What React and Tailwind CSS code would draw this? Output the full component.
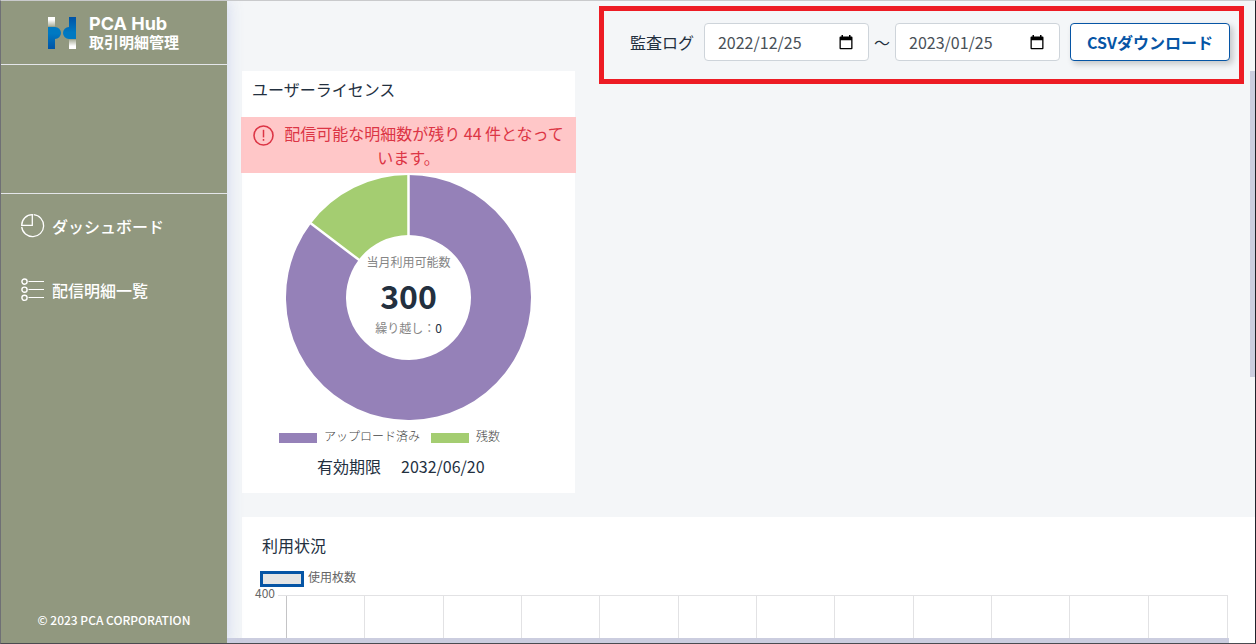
const TOTAL = 300;
const REMAINING = 44;

function polar(radius, degrees) {
  const rad = ((degrees - 90) * Math.PI) / 180;
  return `${122.5 + radius * Math.cos(rad)} ${122.5 + radius * Math.sin(rad)}`;
}

function slice(from, to) {
  const large = to - from > 180 ? 1 : 0;
  return `M${polar(122.5, from)} A122.5 122.5 0 ${large} 1 ${polar(122.5, to)} L${polar(62.5, to)} A62.5 62.5 0 ${large} 0 ${polar(62.5, from)} Z`;
}

function LogoMark() {
  return (
    <svg width="28" height="32" viewBox="0 0 28 32" aria-hidden="true">
      <defs>
        <linearGradient id="fadeDown" x1="0" y1="0" x2="0" y2="1">
          <stop offset="0.3" stopColor="#fff" />
          <stop offset="1" stopColor="#fff" stopOpacity="0.2" />
        </linearGradient>
        <linearGradient id="fadeUp" x1="0" y1="1" x2="0" y2="0">
          <stop offset="0.3" stopColor="#fff" />
          <stop offset="1" stopColor="#fff" stopOpacity="0.2" />
        </linearGradient>
        <linearGradient id="blueDown" x1="0" y1="0" x2="0" y2="1">
          <stop offset="0.3" stopColor="#0079c2" />
          <stop offset="1" stopColor="#0053a6" />
        </linearGradient>
        <linearGradient id="blueUp" x1="0" y1="1" x2="0" y2="0">
          <stop offset="0.3" stopColor="#0079c2" />
          <stop offset="1" stopColor="#0053a6" />
        </linearGradient>
      </defs>
      <path d="M0 0H7V9.5H0Z" fill="url(#fadeDown)" />
      <path d="M21 22.5H28V32H21Z" fill="url(#fadeUp)" />
      <path d="M0 10H7A6 6 0 0 1 7 22V32H0Z" fill="url(#blueDown)" />
      <path d="M28 22H21A6 6 0 0 1 21 10V0H28Z" fill="url(#blueUp)" />
    </svg>
  );
}

function PieIcon() {
  return (
    <svg width="24" height="24" viewBox="0 0 24 24" fill="none" stroke="#fff" strokeWidth="1.3" aria-hidden="true">
      <path d="M12.7 0.7A11 11 0 1 1 0.7 12.9" />
      <path d="M0.7 11.3H11.3V0.7A10.6 10.6 0 0 0 0.7 11.3Z" />
    </svg>
  );
}

function ListIcon() {
  return (
    <svg width="24" height="24" viewBox="0 0 24 24" fill="none" stroke="#fff" strokeWidth="1.4" aria-hidden="true">
      <circle cx="3.5" cy="3.6" r="2.6" />
      <circle cx="3.5" cy="11.7" r="2.6" />
      <circle cx="3.5" cy="19.8" r="2.6" />
      <path d="M7.5 3.5H23M7.5 11.5H23M7.5 19.5H23" strokeWidth="1.1" />
    </svg>
  );
}

function AlertIcon() {
  return (
    <svg className="-my-1 mr-[10px] inline align-middle" width="21" height="21" viewBox="0 0 21 21" fill="none" stroke="#dc3545" aria-hidden="true">
      <circle cx="10.5" cy="10.5" r="9.5" strokeWidth="1.6" />
      <path d="M10.5 4.8V12.4" strokeWidth="1.5" />
      <path d="M10.5 14V15.8" strokeWidth="1.5" />
    </svg>
  );
}

function CalendarIcon() {
  return (
    <svg width="14" height="15" viewBox="0 0 14 15" aria-hidden="true">
      <path d="M2.5 0H4V1.5H10V0H11.5V1.5H12.5Q13.5 1.5 13.5 2.5V13.3Q13.5 14.3 12.5 14.3H1.5Q0.5 14.3 0.5 13.3V2.5Q0.5 1.5 1.5 1.5H2.5ZM1.8 5.2V13H12.2V5.2Z" fill="#000" fillRule="evenodd" />
    </svg>
  );
}

function DateField({ label, value }) {
  return (
    <div className="flex h-[38px] w-[165px] items-center rounded border border-[#ced4da] bg-white pl-[13px] pr-[15px]">
      <input
        type="text"
        aria-label={label}
        defaultValue={value}
        className="w-full min-w-0 bg-transparent text-base text-[#495057] outline-none"
      />
      <button type="button" aria-label={`${label}を選択`} className="shrink-0">
        <CalendarIcon />
      </button>
    </div>
  );
}

function Sidebar() {
  return (
    <aside className="z-10 flex w-[226px] shrink-0 flex-col bg-[#91987f] text-white shadow-[0_0_15px_rgba(200,208,235,0.9)]">
      <div className="flex h-16 items-center gap-[13px] border-b border-[#e4e6ea] pl-[47px]">
        <LogoMark />
        <div>
          <div className="font-[Inter,sans-serif] text-lg leading-[19px] font-bold">PCA Hub</div>
          <div className="text-[15px] leading-[18px] font-bold">取引明細管理</div>
        </div>
      </div>
      <div className="h-[129px] border-b border-[#e4e6ea]" />
      <nav className="flex flex-col font-medium">
        <a href="#dashboard" className="flex h-16 items-center gap-[7px] pl-5">
          <PieIcon />
          ダッシュボード
        </a>
        <a href="#list" className="flex h-16 items-center gap-[7px] pl-5">
          <ListIcon />
          配信明細一覧
        </a>
      </nav>
      <footer className="mt-auto pb-[13px] text-center text-xs leading-5 font-medium">© 2023 PCA CORPORATION</footer>
    </aside>
  );
}

function LicenseCard() {
  const split = 360 - (REMAINING / TOTAL) * 360;
  return (
    <section className="w-[333px] bg-white pb-[15px]">
      <h2 className="px-[10px] pt-[6px] pb-4 text-base leading-6">ユーザーライセンス</h2>
      <p role="alert" className="-mx-px bg-[#ffc7c8] px-3 py-1 text-center leading-6 text-[#dc3545]">
        <AlertIcon />
        配信可能な明細数が残り {REMAINING} 件となっています。
      </p>
      <div className="mt-[2px] grid place-items-center">
        <svg className="col-start-1 row-start-1" width="245" height="245" viewBox="0 0 245 245" aria-hidden="true">
          <path d={slice(0, split)} fill="#9581b8" />
          <path d={slice(split, 360)} fill="#a4cd71" />
          <path
            d={`M${polar(61, 0)}L${polar(124, 0)}M${polar(61, split)}L${polar(124, split)}`}
            stroke="#fff"
            strokeWidth="2.5"
          />
        </svg>
        <div className="col-start-1 row-start-1 pb-[6px] text-center">
          <div className="text-xs leading-[18px] text-[#858585]">当月利用可能数</div>
          <div className="text-[32px] leading-[48px] font-bold">{TOTAL}</div>
          <div className="text-xs leading-[18px]">
            <span className="text-[#858585]">繰り越し：</span>0
          </div>
        </div>
      </div>
      <ul className="mt-[7px] flex items-center pl-[37px] text-xs leading-[18px] font-light text-[#444]">
        <li className="flex items-center gap-[7px]">
          <span className="mt-[3px] h-[10px] w-[38px] bg-[#9581b8]" />
          アップロード済み
        </li>
        <li className="ml-[11px] flex items-center gap-[7px]">
          <span className="mt-[3px] h-[10px] w-[38px] bg-[#a4cd71]" />
          残数
        </li>
      </ul>
      <p className="mt-[9px] flex gap-5 pl-[75px] leading-6">
        <span>有効期限</span>
        <span>2032/06/20</span>
      </p>
    </section>
  );
}

function UsageCard() {
  return (
    <section className="mt-6 flex min-h-0 flex-1 flex-col bg-white pt-4">
      <h2 className="px-5 text-base leading-6">利用状況</h2>
      <div className="mt-2 flex items-center gap-1 pl-[18px] text-xs leading-6 text-[#666]">
        <span className="mt-1 h-4 w-[44px] border-[3px] border-[#0655a5] bg-[#e5e5e5]" />
        使用枚数
      </div>
      <div className="-mt-1 flex min-h-0 flex-1 pr-[27px] pl-[13px] text-xs text-[#666]">
        <span className="w-[23px] leading-4">400</span>
        <div className="mt-[10px] flex flex-1 border-t border-[#e2e2e4]">
          <div className="w-2" />
          <div className="grid flex-1 grid-cols-12 divide-x divide-[#e2e2e4] border-r border-l border-r-[#e2e2e4] border-l-[#c4c4c6]">
            {Array.from({ length: 12 }, (_, i) => (
              <div key={i} />
            ))}
          </div>
        </div>
      </div>
    </section>
  );
}

export default function App() {
  return (
    <div className="flex h-screen overflow-hidden border border-t-[#c9cacc] border-r-[#20222a] border-b-[#4a4b50] border-l-[#6f7075] bg-[#f4f6f8] font-['Noto_Sans_CJK_JP',sans-serif] text-base text-[#23303f]">
      <Sidebar />
      <main className="relative flex min-w-0 flex-1 flex-col pl-[15px]">
        <header className="flex justify-end pt-[5px] pr-[11px]">
          <div className="-mb-[13px] flex items-center border-[5px] border-[#ed1c24] pt-3 pr-[9px] pb-[18px] pl-[26px]">
            <span className="mr-[10px]">監査ログ</span>
            <DateField label="開始日" value="2022/12/25" />
            <span className="mx-[5px]">～</span>
            <DateField label="終了日" value="2023/01/25" />
            <button
              type="button"
              className="ml-[10px] h-[38px] w-40 rounded border border-[#0655a5] bg-white font-bold text-[#0655a5] shadow-[3px_3px_6px_rgba(0,0,0,0.2)]"
            >
              CSVダウンロード
            </button>
          </div>
        </header>
        <LicenseCard />
        <UsageCard />
        <div className="absolute top-[70px] right-0 h-[306px] w-[5px] bg-[#cbcddf]" />
        <div className="absolute right-[26px] bottom-0 left-0 h-[5px] bg-[#cbcddf]" />
      </main>
    </div>
  );
}
